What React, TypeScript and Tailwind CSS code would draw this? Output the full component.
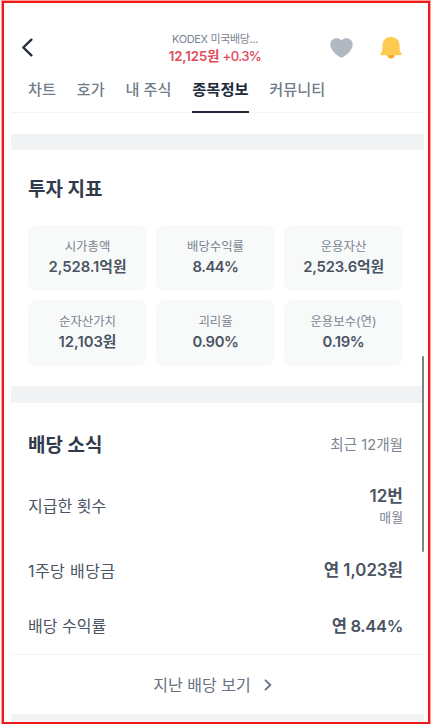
import React from "react";

const tabs = [
  { label: "차트", active: false },
  { label: "호가", active: false },
  { label: "내 주식", active: false },
  { label: "종목정보", active: true },
  { label: "커뮤니티", active: false },
];

const metrics = [
  { label: "시가총액", value: "2,528.1억원", tracking: "tracking-[-0.05px]" },
  { label: "배당수익률", value: "8.44%", tracking: "tracking-[-0.5px]" },
  { label: "운용자산", value: "2,523.6억원", tracking: "tracking-[-0.2px]" },
  { label: "순자산가치", value: "12,103원", tracking: "tracking-normal" },
  { label: "괴리율", value: "0.90%", tracking: "tracking-[-0.4px]" },
  { label: "운용보수(연)", value: "0.19%", tracking: "tracking-[-0.3px]" },
];

function Header() {
  return (
    <header className="flex h-[70px] items-center pt-[20px] pr-[22px] pl-[10px]">
      <svg className="h-5 w-5 shrink-0" viewBox="0 0 20 20" fill="none" stroke="#242c3a" strokeWidth="2.4" strokeLinecap="round" strokeLinejoin="round">
        <path d="M10.400 1.700 2.300 9.500l8.100 7.800" />
      </svg>
      <div className="ml-[118px] w-[112px] shrink-0 pb-px text-center whitespace-nowrap">
        <div className="text-[11px] leading-[17px] tracking-[-0.35px] text-[#7b8491]">KODEX 미국배당...</div>
        <div className="text-[13.2px] leading-[17px] font-medium tracking-[-0.3px] text-[#e04956]">
          <span className="font-semibold tracking-[-0.05px]">12,125원</span>{" "}
          <span className="tracking-[-0.65px]">+0.3%</span>
        </div>
      </div>
      <svg className="ml-[59px] h-5 w-[23px] shrink-0" viewBox="0 0 23 20" fill="#b0b8c1">
        <path d="M11.5 2.3C9.6.1 6.8-.2 4.6.5 1.9 1.4.2 3.8.3 6.7c.2 4.7 5 9.5 9.8 12.5.9.6 1.9.6 2.8 0 4.8-3 9.6-7.8 9.8-12.5C22.800 3.800 21.100 1.400 18.400.5 16.200-.2 13.400.1 11.500 2.300Z" />
      </svg>
      <svg className="ml-auto h-6 w-[22px] shrink-0" viewBox="0 0 22 24">
        <path d="M7.200 18.500h7.600c0 2.200-1.600 4.200-3.800 4.200s-3.800-2-3.800-4.200Z" fill="#fba52c" />
        <path d="M11 1.100c-4.900 0-8.300 3.300-8.500 7.700l-.1 4.500c-.1 1.500-.6 2.500-1.500 3.500-1.100 1.200-.7 2.400.9 2.400h18.400c1.600 0 2-1.200.9-2.400-.9-1-1.400-2-1.500-3.500l-.1-4.500C19.300 4.400 15.900 1.100 11 1.100Z" fill="#ffca52" />
      </svg>
    </header>
  );
}

function Tabs() {
  return (
    <nav className="flex h-[40px] gap-[20.800px] border-b border-[#f2f3f5] pl-[17px] whitespace-nowrap">
      {tabs.map((tab) => (
        <div
          key={tab.label}
          className={
            tab.active
              ? "h-[40px] border-b-2 border-[#202a3a] text-[15.300px] leading-[34px] font-bold text-[#202a3a]"
              : "h-[40px] text-[15.200px] leading-[34px] font-medium text-[#737c89]"
          }
        >
          {tab.label}
        </div>
      ))}
    </nav>
  );
}

function Metrics() {
  return (
    <section className="h-[236px] pt-[25px] pr-[21px] pl-[17px]">
      <h2 className="text-[19px] leading-[30px] font-bold text-[#303a4b]">투자 지표</h2>
      <div className="mt-[20px] grid grid-cols-3 gap-[9px]">
        {metrics.map((m) => (
          <div key={m.label} className="h-[66px] rounded-[9px] bg-[#f8faf9] pt-[12px] text-center whitespace-nowrap">
            <div className="text-[12.400px] leading-[19px] text-[#7b8491]">{m.label}</div>
            <div className={`text-[14.800px] leading-[23px] font-semibold text-[#4a5463] ${m.tracking}`}>{m.value}</div>
          </div>
        ))}
      </div>
    </section>
  );
}

function Dividends() {
  return (
    <section className="h-[252px] border-b border-[#f2f3f5] pt-[26px] pr-[21px] pl-[17px]">
      <div className="flex h-[32px] items-center justify-between">
        <h2 className="pt-[3px] text-[19px] font-bold text-[#303a4b]">배당 소식</h2>
        <span className="pt-px text-[14.600px] text-[#7b8491]">최근 12개월</span>
      </div>
      <div className="mt-[17px] flex h-[56px] items-center justify-between">
        <span className="text-[16px] text-[#4a5463]">지급한 횟수</span>
        <div className="text-right">
          <div className="text-[17px] leading-[23px] font-semibold text-[#4a5463]">12번</div>
          <div className="text-[12.900px] leading-[20px] text-[#7b8491]">매월</div>
        </div>
      </div>
      <div className="mt-[9px] flex h-[56px] items-center justify-between text-[#4a5463]">
        <span className="text-[16px] tracking-[0.400px]">1주당 배당금</span>
        <span className="text-[16.800px] font-semibold">연 1,023원</span>
      </div>
      <div className="flex h-[54px] items-center justify-between text-[#4a5463]">
        <span className="text-[16px]">배당 수익률</span>
        <span className="text-[16.600px] font-semibold tracking-[-0.350px]">연 8.44%</span>
      </div>
    </section>
  );
}

export default function App() {
  return (
    <div className="h-[725px] w-[431px] overflow-hidden bg-white pl-px font-['Inter','Noto_Sans_CJK_KR',sans-serif]">
      <div className="relative h-[724px] w-[430px] border-t border-r border-l border-[#ff9d9d]">
        <div className="h-full w-full overflow-hidden border-2 border-[#f01818] bg-white pr-[4px] pl-[7px]">
          <Header />
          <Tabs />
          <div className="mt-[21px] h-4 bg-[#f1f3f5]" />
          <Metrics />
          <div className="h-[17px] bg-[#f1f3f5]" />
          <Dividends />
          <div className="flex h-[59px] items-center justify-center gap-[13px] pr-[10px] text-[16px] text-[#687280]">
            지난 배당 보기
            <svg className="mt-px h-3 w-2" viewBox="0 0 8 12" fill="none" stroke="#687280" strokeWidth="1.8" strokeLinecap="round" strokeLinejoin="round">
              <path d="m1.500 1.300 4.900 4.700-4.900 4.700" />
            </svg>
          </div>
          <div className="h-4 bg-[#f1f3f5]" />
        </div>
        <div className="absolute top-[355px] right-[6px] h-[196px] w-[2px] rounded-full bg-[#808285]" />
      </div>
    </div>
  );
}
